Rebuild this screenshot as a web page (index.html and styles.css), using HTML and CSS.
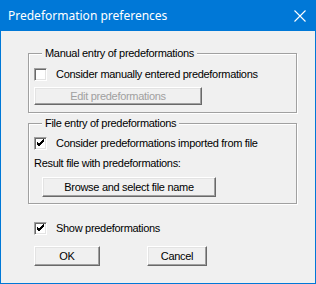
FILE: index.html
```html
<!DOCTYPE html>
<html>
<head>
<meta charset="utf-8">
<link rel="stylesheet" href="styles.css">
</head>
<body>
<div class="window">
  <div class="titlebar">
    <span class="title">Predeformation preferences</span>
    <svg class="close" width="12" height="12" viewBox="0 0 12 12"><path d="M0.5 0.5 L11.5 11.5 M11.5 0.5 L0.5 11.5" stroke="#fff" stroke-width="1.1" fill="none"/></svg>
  </div>
  <div class="client">
    <fieldset class="group g1">
      <legend>Manual entry of predeformations</legend>
      <div class="check-row first"><span class="cb"></span><span class="lbl">Consider manually entered predeformations</span></div>
      <div class="btn edit disabled">Edit predeformations</div>
    </fieldset>
    <fieldset class="group g2">
      <legend>File entry of predeformations</legend>
      <div class="check-row first"><span class="cb"><svg width="13" height="13" viewBox="0 0 13 13"><path d="M3 6 L5 8 L10 3 M3 7 L5 9 L10 4 M3 5 L5 7 L10 2" stroke="#000" stroke-width="1" fill="none"/></svg></span><span class="lbl">Consider predeformations imported from file</span></div>
      <div class="text">Result file with predeformations:</div>
      <div class="btn browse">Browse and select file name</div>
    </fieldset>
    <div class="check-row show"><span class="cb"><svg width="13" height="13" viewBox="0 0 13 13"><path d="M3 6 L5 8 L10 3 M3 7 L5 9 L10 4 M3 5 L5 7 L10 2" stroke="#000" stroke-width="1" fill="none"/></svg></span><span class="lbl">Show predeformations</span></div>
    <div class="actions">
      <div class="btn ok">OK</div>
      <div class="btn cancel">Cancel</div>
    </div>
  </div>
</div>
</body>
</html>
```
FILE: styles.css
```css
html, body { margin: 0; padding: 0; }
body { width: 316px; height: 284px; overflow: hidden; }
.window {
  width: 316px; height: 284px; box-sizing: border-box;
  background: #0078d7; padding: 0 1px 1px 1px;
  display: flex; flex-direction: column;
}
.titlebar {
  height: 31px; flex: none; display: flex; align-items: center;
  justify-content: space-between; padding: 0 10px 0 8px;
  margin: 0 -1px;
}
.title {
  color: #fff; font-family: "Noto Sans", "Open Sans", sans-serif; font-size: 12px;
}
.close { display: block; margin-top: 0; }
.client {
  flex: 1; background: #f0f0f0; padding: 16px 0 0 27px;
  font-family: "Liberation Sans", Arial, sans-serif; font-size: 11px; color: #000;
  letter-spacing: -0.3px; line-height: 13px;
}
.group {
  margin: 0; width: 269px; box-sizing: border-box;
  border: 1px solid #a0a0a0;
  box-shadow: 1px 1px 0 #fff, inset 1px 1px 0 #fff;
  padding: 0 0 7px 5px; min-width: 0;
}
.group legend {
  padding: 0 3px; margin-left: 8px; line-height: 13px; background: #f0f0f0;
}
.g2 { margin-top: 4px; padding-bottom: 6px; }
.check-row { display: flex; align-items: center; height: 13px; }
.check-row.first { margin-top: 8px; }
.g2 .check-row.first { margin-top: 7px; }
.cb {
  width: 13px; height: 13px; box-sizing: border-box; flex: none;
  background: #fff; position: relative;
  border: 1px solid; border-color: #a0a0a0 #fff #fff #a0a0a0;
  box-shadow: inset 1px 1px 0 #696969, inset -1px -1px 0 #e3e3e3;
}
.cb svg { position: absolute; left: -1px; top: -1px; }
.lbl { margin-left: 9px; }
.text { margin-top: 7px; }
.btn {
  box-sizing: border-box; display: flex; align-items: center; justify-content: center;
  border: 1px solid; border-color: #fff #696969 #696969 #fff;
  box-shadow: inset -1px -1px 0 #a0a0a0, inset 1px 1px 0 #e3e3e3;
  background: #f0f0f0;
}
.btn.disabled { color: #a0a0a0; }
.edit { width: 168px; height: 18px; margin-top: 6px; }
.browse { width: 174px; height: 20px; margin-top: 7px; margin-left: 8px; }
.show { margin-top: 18px; margin-left: 6px; }
.actions { display: flex; margin-top: 11px; margin-left: 6px; gap: 47px; }
.ok { width: 66px; height: 20px; }
.cancel { width: 60px; height: 20px; }
```
